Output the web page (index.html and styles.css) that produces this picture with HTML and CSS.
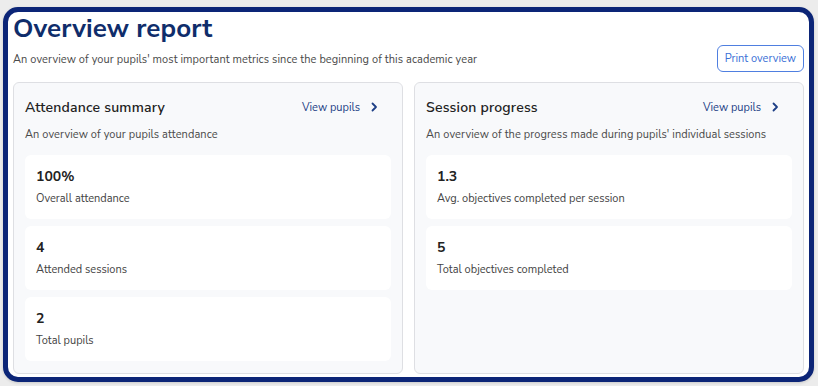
FILE: index.html
```html
<!DOCTYPE html>
<html>
<head>
<meta charset="utf-8">
<link rel="stylesheet" href="styles.css">
</head>
<body>
<div class="frame">
  <h1 class="title">Overview report</h1>
  <div class="subrow">
    <p class="subtitle">An overview of your pupils' most important metrics since the beginning of this academic year</p>
    <button class="print">Print overview</button>
  </div>
  <div class="cards">
    <section class="card">
      <div class="card-head">
        <h2>Attendance summary</h2>
        <a class="link">View pupils <svg width="12" height="12" viewBox="0 0 12 12"><path d="M4.5 2.5 L8 6 L4.5 9.5" fill="none" stroke="currentColor" stroke-width="1.8" stroke-linecap="round" stroke-linejoin="round"/></svg></a>
      </div>
      <p class="desc">An overview of your pupils attendance</p>
      <div class="stat"><div class="val">100%</div><div class="lbl">Overall attendance</div></div>
      <div class="stat"><div class="val">4</div><div class="lbl">Attended sessions</div></div>
      <div class="stat"><div class="val">2</div><div class="lbl">Total pupils</div></div>
    </section>
    <section class="card">
      <div class="card-head">
        <h2>Session progress</h2>
        <a class="link">View pupils <svg width="12" height="12" viewBox="0 0 12 12"><path d="M4.5 2.5 L8 6 L4.5 9.5" fill="none" stroke="currentColor" stroke-width="1.8" stroke-linecap="round" stroke-linejoin="round"/></svg></a>
      </div>
      <p class="desc">An overview of the progress made during pupils' individual sessions</p>
      <div class="stat"><div class="val">1.3</div><div class="lbl">Avg. objectives completed per session</div></div>
      <div class="stat"><div class="val">5</div><div class="lbl">Total objectives completed</div></div>
    </section>
  </div>
</div>
</body>
</html>
```
FILE: styles.css
```css
html, body { margin: 0; padding: 0; }
body {
  background: #ececec;
  font-family: "Nunito Sans", "Noto Sans", "Lato", sans-serif;
  width: 818px;
  height: 386px;
  overflow: hidden;
}
.frame {
  box-sizing: border-box;
  margin: 7px 4px 0 3px;
  height: 375px;
  border: 5px solid #0c2577;
  border-radius: 15px;
  background: #ffffff;
  padding: 2px 5px 3px 5px;
  display: flex;
  flex-direction: column;
  overflow: hidden;
  box-shadow: 0 1px 3px rgba(0,0,0,0.15);
}
.title {
  margin: 0;
  font-size: 26px;
  font-weight: 700;
  color: #0f2d6b;
  line-height: 30px;
  letter-spacing: 0.1px;
}
.subrow {
  display: flex;
  align-items: flex-end;
  justify-content: space-between;
  margin-top: 1px;
}
.subtitle {
  margin: 0 0 4px 0;
  font-size: 11px;
  color: #4a4a4a;
  line-height: 16px;
  letter-spacing: 0.08px;
}
.print {
  font-family: inherit;
  font-size: 11px;
  color: #3b6fd6;
  background: #fff;
  border: 1px solid #4f7fe0;
  border-radius: 6px;
  height: 27px;
  padding: 0 7px;
  margin-bottom: 0;
}
.cards {
  margin-top: 10px;
  display: grid;
  grid-template-columns: 1fr 1fr;
  gap: 11px;
  flex: 1;
  min-height: 0;
}
.card {
  background: #f8f9fb;
  border: 1px solid #dedfe3;
  border-radius: 6px;
  padding: 0 11px;
  display: flex;
  flex-direction: column;
  gap: 7px;
}
.card-head {
  display: flex;
  justify-content: space-between;
  align-items: center;
  height: 24px;
  margin-top: 12px;
}
.card-head h2 {
  margin: 0;
  font-size: 14px;
  font-weight: 600;
  color: #222;
  letter-spacing: 0.2px;
}
.link {
  font-size: 11px;
  color: #1d3f86;
  display: flex;
  align-items: center;
  gap: 8px;
  margin-right: 11px;
}
.desc {
  margin: 1px 0 5px 0;
  font-size: 11px;
  color: #4a4a4a;
  line-height: 16px;
  letter-spacing: 0.08px;
}
.stat {
  background: #ffffff;
  border-radius: 6px;
  height: 64px;
  box-sizing: border-box;
  padding: 13px 11px;
}
.val {
  font-size: 14px;
  font-weight: 700;
  color: #222;
  line-height: 18px;
}
.lbl {
  margin-top: 6px;
  font-size: 11px;
  color: #444;
  line-height: 14px;
}
```
